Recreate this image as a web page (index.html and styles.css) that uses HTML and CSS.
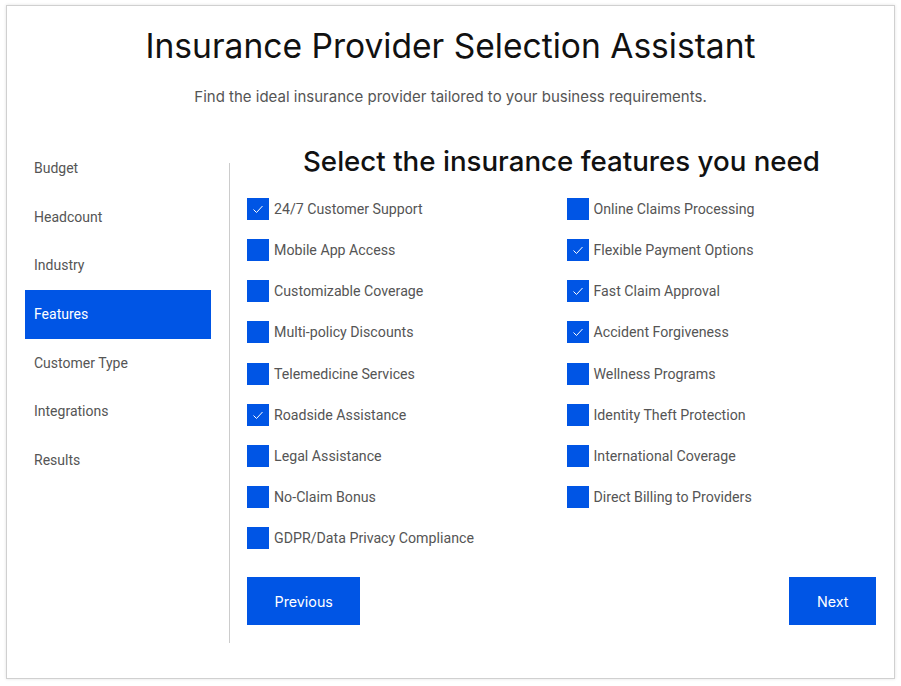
FILE: index.html
```html
<!DOCTYPE html>
<html lang="en">
<head>
  <meta charset="UTF-8" />
  <title>Insurance Provider Selection Assistant</title>
  <link rel="stylesheet" href="styles.css">
</head>
<body>
  <div class="wizard">
    <header class="wizard-head">
      <h1>Insurance Provider Selection Assistant</h1>
      <p class="subtitle">Find the ideal insurance provider tailored to your business requirements.</p>
    </header>

    <div class="wizard-body">
      <!-- steps -->
      <ul class="steps">
        <li>Budget</li>
        <li>Headcount</li>
        <li>Industry</li>
        <li class="active">Features</li>
        <li>Customer Type</li>
        <li>Integrations</li>
        <li>Results</li>
      </ul>

      <div class="divider"></div>

      <!-- features step -->
      <section class="step-panel">
        <h2>Select the insurance features you need</h2>
        <div class="options">
          <label class="option"><span class="box checked"></span>24/7 Customer Support</label>
          <label class="option"><span class="box"></span>Online Claims Processing</label>
          <label class="option"><span class="box"></span>Mobile App Access</label>
          <label class="option"><span class="box checked"></span>Flexible Payment Options</label>
          <label class="option"><span class="box"></span>Customizable Coverage</label>
          <label class="option"><span class="box checked"></span>Fast Claim Approval</label>
          <label class="option"><span class="box"></span>Multi-policy Discounts</label>
          <label class="option"><span class="box checked"></span>Accident Forgiveness</label>
          <label class="option"><span class="box"></span>Telemedicine Services</label>
          <label class="option"><span class="box"></span>Wellness Programs</label>
          <label class="option"><span class="box checked"></span>Roadside Assistance</label>
          <label class="option"><span class="box"></span>Identity Theft Protection</label>
          <label class="option"><span class="box"></span>Legal Assistance</label>
          <label class="option"><span class="box"></span>International Coverage</label>
          <label class="option"><span class="box"></span>No-Claim Bonus</label>
          <label class="option"><span class="box"></span>Direct Billing to Providers</label>
          <label class="option"><span class="box"></span>GDPR/Data Privacy Compliance</label>
        </div>
        <div class="nav">
          <button type="button">Previous</button>
          <button type="button">Next</button>
        </div>
      </section>
    </div>
  </div>

  <script>
    // tick mark for checked boxes
    const tick = '<svg width="12" height="10" viewBox="0 0 12 10"><path d="M1.5 5.5 L4.5 8.5 L10.5 2" fill="none" stroke="#fff" stroke-width="1"/></svg>';
    document.querySelectorAll('.box.checked').forEach(b => { b.innerHTML = tick; });
    document.querySelectorAll('.option').forEach(o => {
      o.addEventListener('click', () => {
        const b = o.querySelector('.box');
        b.classList.toggle('checked');
        b.innerHTML = b.classList.contains('checked') ? tick : '';
      });
    });
  </script>
</body>
</html>
```

FILE: styles.css
```css
body {
  margin: 0;
  background: #fff;
  font-family: Roboto, "Liberation Sans", sans-serif;
}
.wizard {
  margin: 5px 6px 7px 6px;
  height: 674px;
  border: 1px solid #d0d0d0;
  box-shadow: 0 0 3px rgba(0,0,0,0.12);
  padding: 0 18px;
  box-sizing: border-box;
}
.wizard-head {
  text-align: center;
}
.wizard-head h1 {
  margin: 0;
  padding-top: 20px;
  font-family: Inter, "Open Sans", sans-serif;
  font-weight: 400;
  font-size: 33.6px;
  line-height: 40px;
  color: #111;
}
.subtitle {
  margin: 21px 0 0;
  font-family: Inter, "Open Sans", sans-serif;
  font-size: 15px;
  line-height: 20px;
  color: #555;
}
.wizard-body {
  display: flex;
  margin-top: 37px;
}
.steps {
  list-style: none;
  margin: 0;
  padding: 0;
  width: 186px;
}
.steps li {
  height: 48.7px;
  line-height: 48.7px;
  padding-left: 9px;
  font-size: 14px;
  color: #555;
}
.steps li.active {
  background: #0055e5;
  color: #fff;
}
.divider {
  width: 1px;
  background: #ccc;
  margin: 19px 17px 0 18px;
}
.step-panel {
  flex: 1;
  padding-bottom: 18px;
}
.step-panel h2 {
  margin: 1px 0 0;
  text-align: center;
  font-family: Inter, "Open Sans", sans-serif;
  font-weight: 500;
  font-size: 27.7px;
  line-height: 32px;
  color: #111;
}
.options {
  display: grid;
  grid-template-columns: 1fr 1fr;
  column-gap: 10px;
  row-gap: 19.15px;
  margin-top: 21px;
}
.option {
  display: flex;
  align-items: center;
  gap: 5px;
  font-size: 14.2px;
  color: #555;
  cursor: pointer;
}
.box {
  width: 22px;
  height: 22px;
  background: #0055e5;
  display: flex;
  align-items: center;
  justify-content: center;
}
.nav {
  display: flex;
  justify-content: space-between;
  margin-top: 28px;
}
.nav button {
  height: 48px;
  padding: 0 27.5px;
  border: none;
  background: #0055e5;
  color: #fff;
  font-family: Inter, "Open Sans", sans-serif;
  font-size: 14.3px;
  cursor: pointer;
}
```
